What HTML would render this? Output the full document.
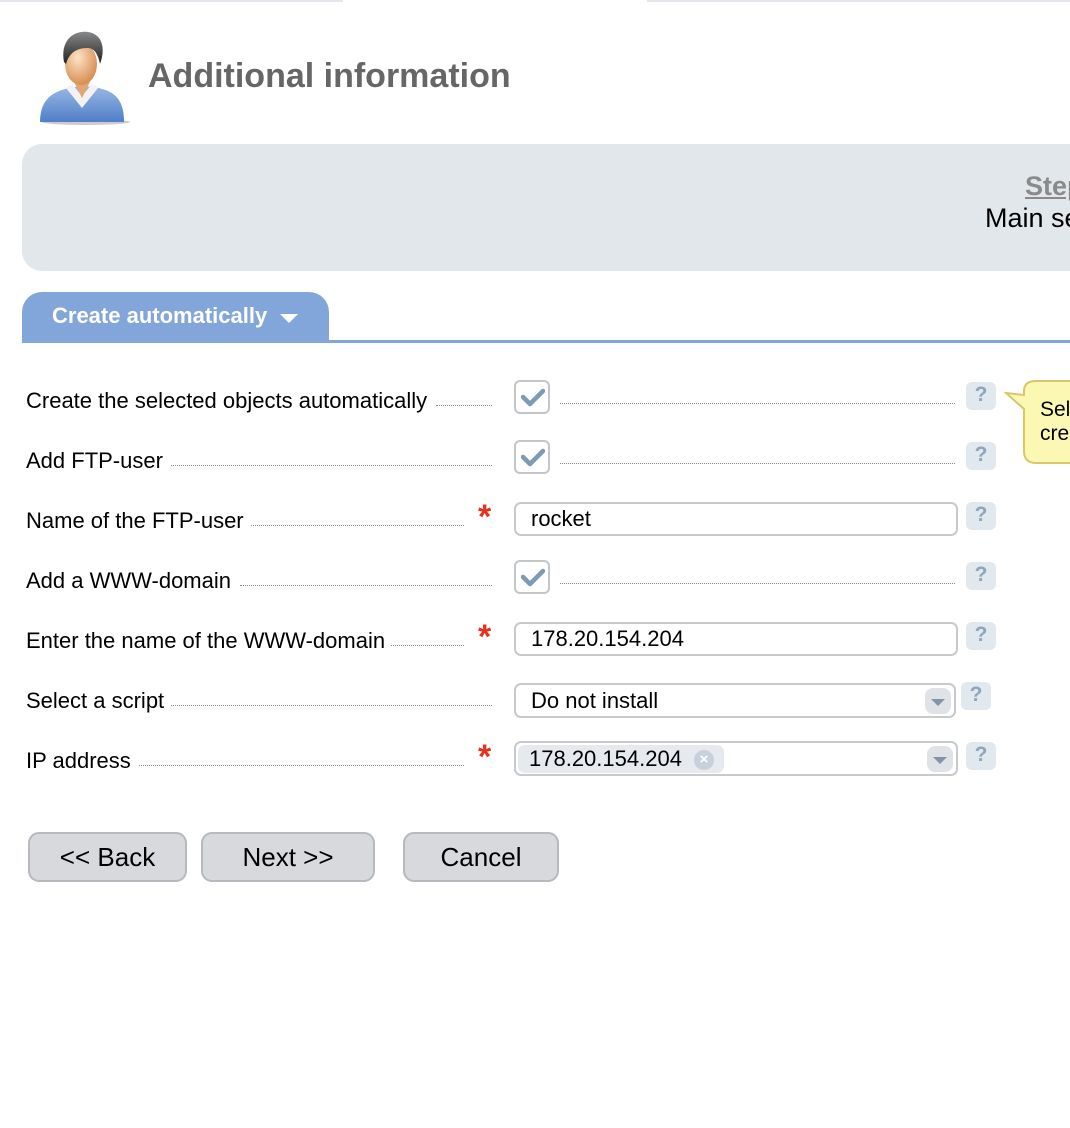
<!DOCTYPE html>
<html><head><meta charset="utf-8"><style>
*{box-sizing:border-box;margin:0;padding:0}
html,body{width:1070px;height:1128px;overflow:hidden}
body{background:#fff;font-family:"Liberation Sans",Arial,sans-serif;color:#000}
#w{position:relative;width:1070px;height:1128px;overflow:hidden}
.a{position:absolute}
.lbl{position:absolute;left:26px;font-size:22px;line-height:24px;white-space:nowrap}
.dot{position:absolute;height:0;border-bottom:1.5px dotted #888}
.cb{position:absolute;left:514px;width:36px;height:34px;border:2px solid #c4c6c9;border-radius:6px;background:#fff}
.cb svg{position:absolute;left:5px;top:5px}
.hp{position:absolute;width:30px;height:28px;border-radius:6px;background:#e1e8ee;color:#8ea5bb;font-weight:bold;font-size:21px;text-align:center;line-height:26px}
.inp{position:absolute;left:514px;width:444px;height:34px;border:2px solid #c8c9cb;border-radius:7px;background:#fff;font-size:22px;line-height:30px;padding-left:15px}
.star{position:absolute;left:478px;color:#e8301e;font-size:34px;font-weight:bold;line-height:30px}
.arr{position:absolute;right:3px;top:3px;width:26px;height:26px;border-radius:8px;background:#dfe3e8}
.arr:after{content:"";position:absolute;left:6px;top:11px;border-left:7px solid transparent;border-right:7px solid transparent;border-top:7px solid #8494a8}
.btn{position:absolute;top:832px;height:50px;border:2px solid #b6b9bd;border-radius:11px;background:#d7d9dd;font-size:26px;text-align:center;line-height:46px}
</style></head><body><div id="w">
<div class="a" style="left:0;top:0;width:343px;height:2px;background:#e3e6ea"></div>
<div class="a" style="left:647px;top:0;width:423px;height:2px;background:#e3e6ea"></div>

<svg class="a" style="left:36px;top:26px" width="96" height="100" viewBox="0 0 96 100">
<defs>
<radialGradient id="sk" cx="40%" cy="35%" r="65%"><stop offset="0" stop-color="#fde3c8"/><stop offset="1" stop-color="#d98f52"/></radialGradient>
<linearGradient id="sh" x1="0" y1="0" x2="0" y2="1"><stop offset="0" stop-color="#9bb8e6"/><stop offset="1" stop-color="#4f7fc6"/></linearGradient>
<linearGradient id="hr" x1="0" y1="0" x2="0" y2="1"><stop offset="0" stop-color="#888"/><stop offset="1" stop-color="#222"/></linearGradient>
</defs>
<ellipse cx="50" cy="96" rx="44" ry="3" fill="#ccc"/>
<path d="M4 96 C4 72 18 62 48 60 C78 62 88 72 88 96 Z" fill="url(#sh)"/>
<path d="M30 62 L46 82 L62 62 L56 58 L46 70 L36 58 Z" fill="#f2f2f2"/>
<path d="M38 56 L46 72 L54 56 Z" fill="#e6a56d"/>
<ellipse cx="45" cy="38" rx="16" ry="21" fill="url(#sk)"/>
<path d="M28 36 C24 14 38 4 52 6 C66 8 70 22 64 38 C62 28 58 22 52 22 C44 22 34 24 30 38 Z" fill="url(#hr)"/>
</svg>
<div class="a" style="left:148px;top:56px;font-size:34px;font-weight:bold;color:#666;line-height:40px;white-space:nowrap">Additional information</div>

<div class="a" style="left:22px;top:144px;width:1048px;height:127px;border-radius:20px 0 0 20px;background:#e2e7eb;overflow:hidden">
<div class="a" style="left:1003px;top:26px;font-size:27px;font-weight:bold;color:#8a8a8a;text-decoration:underline;line-height:32px;white-space:nowrap">Step</div>
<div class="a" style="left:963px;top:58px;font-size:27px;line-height:32px;white-space:nowrap">Main settings</div>
</div>

<div class="a" style="left:22px;top:292px;width:307px;height:51px;border-radius:20px 20px 0 0;background:#82a5da"></div>
<div class="a" style="left:52px;top:303px;font-size:22px;font-weight:bold;color:#fff;line-height:26px;white-space:nowrap">Create automatically</div>
<div class="a" style="left:280px;top:314px;border-left:9px solid transparent;border-right:9px solid transparent;border-top:9px solid #fff"></div>
<div class="a" style="left:329px;top:340px;width:741px;height:3px;background:#82a5da"></div>

<div class="lbl" style="top:389px">Create the selected objects automatically</div>
<div class="dot" style="left:436px;width:56px;top:405px"></div>
<div class="cb" style="top:380px"><svg width="24" height="22" viewBox="0 0 24 22"><path d="M2 10 L9 17 L22 4" fill="none" stroke="#7f9ab4" stroke-width="4.5" stroke-linecap="round" stroke-linejoin="round"/></svg></div>
<div class="dot" style="left:560px;width:395px;top:403px"></div>
<div class="hp" style="left:966px;top:382px">?</div>

<div class="a" style="left:1004px;top:379px;width:66px;height:86px;overflow:hidden">
<svg width="70" height="86"><path d="M20 12 Q20 2 32 2 L70 2 L70 84 L32 84 Q20 84 20 72 L20 30 L2 14 L20 16 Z" fill="#fbf8b4" stroke="#d8c86a" stroke-width="2"/></svg>
<div class="a" style="left:36px;top:19px;font-size:21px;line-height:24px;white-space:nowrap">Select<br>create</div>
</div>

<div class="lbl" style="top:449px">Add FTP-user</div>
<div class="dot" style="left:171px;width:321px;top:465px"></div>
<div class="cb" style="top:440px"><svg width="24" height="22" viewBox="0 0 24 22"><path d="M2 10 L9 17 L22 4" fill="none" stroke="#7f9ab4" stroke-width="4.5" stroke-linecap="round" stroke-linejoin="round"/></svg></div>
<div class="dot" style="left:560px;width:395px;top:463px"></div>
<div class="hp" style="left:966px;top:442px">?</div>

<div class="lbl" style="top:509px">Name of the FTP-user</div>
<div class="dot" style="left:251px;width:213px;top:525px"></div>
<div class="star" style="top:502px">*</div>
<div class="inp" style="top:502px">rocket</div>
<div class="hp" style="left:966px;top:502px">?</div>

<div class="lbl" style="top:569px">Add a WWW-domain</div>
<div class="dot" style="left:240px;width:252px;top:585px"></div>
<div class="cb" style="top:560px"><svg width="24" height="22" viewBox="0 0 24 22"><path d="M2 10 L9 17 L22 4" fill="none" stroke="#7f9ab4" stroke-width="4.5" stroke-linecap="round" stroke-linejoin="round"/></svg></div>
<div class="dot" style="left:560px;width:395px;top:583px"></div>
<div class="hp" style="left:966px;top:562px">?</div>

<div class="lbl" style="top:629px">Enter the name of the WWW-domain</div>
<div class="dot" style="left:391px;width:73px;top:645px"></div>
<div class="star" style="top:622px">*</div>
<div class="inp" style="top:622px">178.20.154.204</div>
<div class="hp" style="left:966px;top:622px">?</div>

<div class="lbl" style="top:689px">Select a script</div>
<div class="dot" style="left:171px;width:321px;top:705px"></div>
<div class="inp" style="top:683px;width:442px;height:35px;line-height:32px">Do not install<div class="arr"></div></div>
<div class="hp" style="left:961px;top:682px">?</div>

<div class="lbl" style="top:749px">IP address</div>
<div class="dot" style="left:139px;width:325px;top:765px"></div>
<div class="star" style="top:742px">*</div>
<div class="inp" style="top:741px;height:35px;padding-left:2px">
<div class="a" style="left:2px;top:2px;width:206px;height:28px;border-radius:7px;background:#e6e9ee;font-size:22px;line-height:28px;padding-left:11px;white-space:nowrap">178.20.154.204
<div class="a" style="left:176px;top:5px;width:20px;height:20px;border-radius:10px;background:#c8d0db;color:#fff;font-size:15px;line-height:20px;text-align:center;font-weight:bold">×</div></div>
<div class="arr"></div></div>
<div class="hp" style="left:966px;top:742px">?</div>

<div class="btn" style="left:28px;width:159px">&lt;&lt; Back</div>
<div class="btn" style="left:201px;width:174px">Next &gt;&gt;</div>
<div class="btn" style="left:403px;width:156px">Cancel</div>
</div></body></html>
